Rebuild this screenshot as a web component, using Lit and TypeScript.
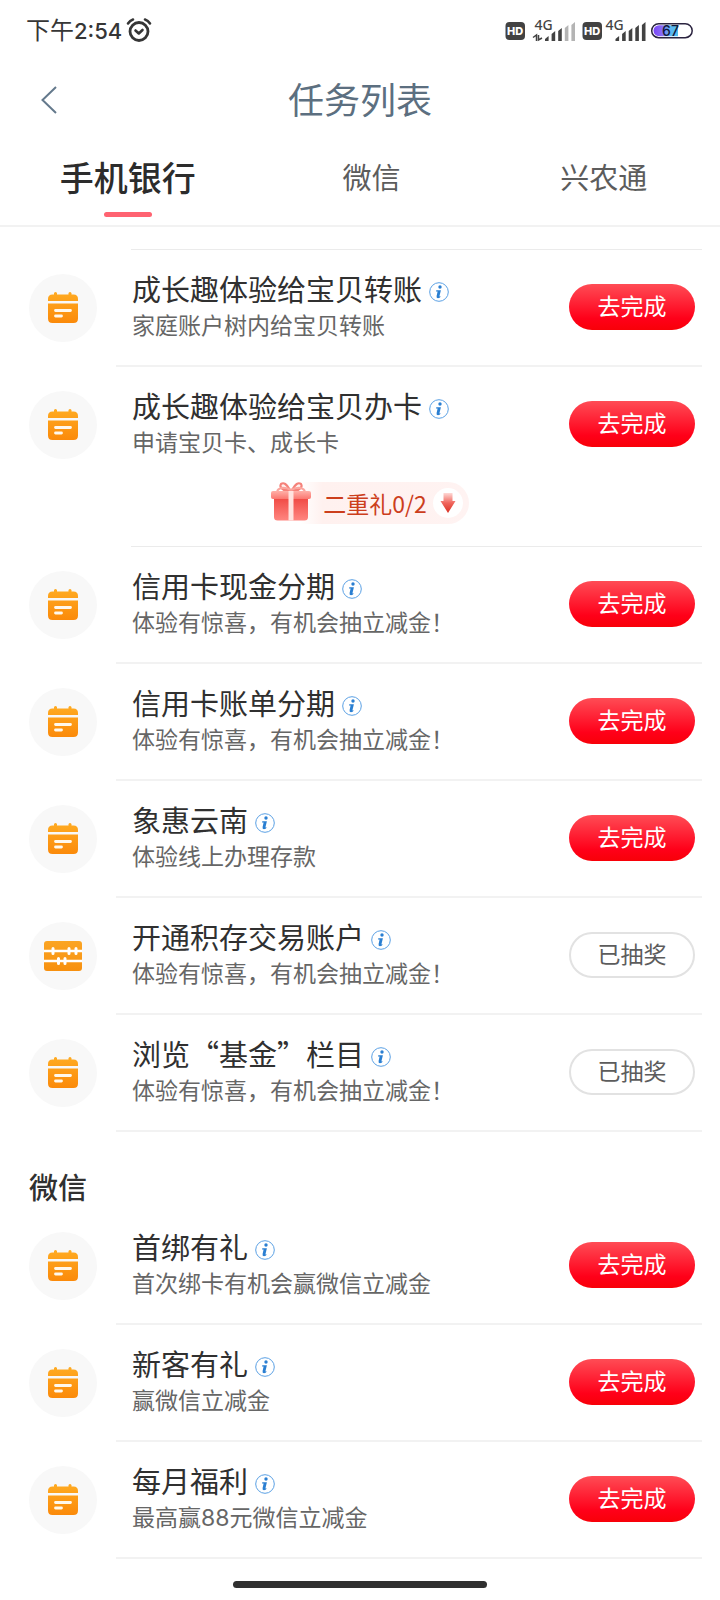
import { LitElement, html, css, svg } from "lit";
import { customElement, property, state } from "lit/decorators.js";

type IconName = "calendar" | "abacus";

interface Task {
  title: string;
  desc: string;
  icon?: IconName;
  done?: boolean;
}

const familyTasks: Task[] = [
  { title: "成长趣体验给宝贝转账", desc: "家庭账户树内给宝贝转账" },
  { title: "成长趣体验给宝贝办卡", desc: "申请宝贝卡、成长卡" },
];

const bankTasks: Task[] = [
  { title: "信用卡现金分期", desc: "体验有惊喜，有机会抽立减金！" },
  { title: "信用卡账单分期", desc: "体验有惊喜，有机会抽立减金！" },
  { title: "象惠云南", desc: "体验线上办理存款" },
  { title: "开通积存交易账户", desc: "体验有惊喜，有机会抽立减金！", icon: "abacus", done: true },
  { title: "浏览“基金”栏目", desc: "体验有惊喜，有机会抽立减金！", done: true },
];

const wechatTasks: Task[] = [
  { title: "首绑有礼", desc: "首次绑卡有机会赢微信立减金" },
  { title: "新客有礼", desc: "赢微信立减金" },
  { title: "每月福利", desc: "最高赢88元微信立减金" },
];

const withDigits = (text: string) =>
  text.split(/(\d+)/).map((part) => (/^\d+$/.test(part) ? html`<span class="num">${part}</span>` : part));

@customElement("status-bar")
class StatusBar extends LitElement {
  static styles = css`
    :host {
      display: flex;
      align-items: center;
      justify-content: space-between;
      height: 60px;
      padding: 0 27px 0 26px;
      color: #363636;
    }
    .clock {
      display: flex;
      align-items: center;
      gap: 4px;
      font-size: 24px;
      line-height: 32px;
    }
    .num {
      font-family: Inter, sans-serif;
      font-weight: 500;
      font-size: 22px;
    }
    svg {
      display: block;
    }
    .g {
      font: 500 14px "Noto Sans", sans-serif;
      fill: #444;
    }
    .hd {
      font: 800 11px Inter, sans-serif;
      fill: #fff;
    }
    .level {
      font: 500 14px Inter, sans-serif;
      fill: #10183c;
    }
  `;

  private bars(x: number, active: number) {
    const tops = [36, 31, 28, 25, 22];
    return tops.map((top, i) => {
      const left = x + i * 6.6;
      return svg`<path d="M${left} ${top + 3} L${left + 3.6} ${top} V41 H${left} Z"
        fill=${i < active ? "#424242" : "#b4b4b4"} />`;
    });
  }

  render() {
    return html`
      <div class="clock">
        <span>下午<span class="num">2:54</span></span>
        <svg width="26" height="26" viewBox="0 0 26 26" fill="none" stroke="#363636" stroke-linecap="round" aria-hidden="true">
          <circle cx="13" cy="14.5" r="9" stroke-width="2.8" />
          <path d="M2 6.500 Q4 3.500 7 2.500 M24 6.500 Q22 3.500 19 2.500" stroke-width="2.600" />
          <path d="M9.500 13.500 L12.800 16.500 L16.500 13" stroke-width="2.600" stroke-linejoin="round" />
        </svg>
      </div>
      <svg width="188" height="60" viewBox="505 0 188 60" aria-hidden="true">
        <defs>
          <linearGradient id="charge" x1="0" x2="1" y1="0" y2="0">
            <stop offset="0" stop-color="#7a45f5" />
            <stop offset="0.350" stop-color="#8a6cf8" />
            <stop offset="0.650" stop-color="#5fb4f2" />
            <stop offset="1" stop-color="#4fc0ee" />
          </linearGradient>
        </defs>
        <rect x="505.500" y="22" width="19.500" height="18" rx="4" fill="#424242" />
        <text class="hd" x="515.2" y="35" text-anchor="middle">HD</text>
        <text class="g" x="534.5" y="30">4G</text>
        <path d="M533 37.500 L536.500 35 V41 M538.500 35 V40 L542 38" fill="none" stroke="#424242" stroke-width="1.500" />
        ${this.bars(545, 3)}
        <rect x="582.500" y="22" width="19.500" height="18" rx="4" fill="#424242" />
        <text class="hd" x="592.2" y="35" text-anchor="middle">HD</text>
        <text class="g" x="605.5" y="30">4G</text>
        ${this.bars(615.5, 5)}
        <rect x="651.700" y="23.700" width="40.500" height="14" rx="7" fill="#fff" stroke="#2b2440" stroke-width="1.500" />
        <path d="M659 25.200 H678 V36.200 H659 A5.500 5.500 0 0 1 659 25.200 Z" fill="url(#charge)" />
        <text class="level" x="670.5" y="36" text-anchor="middle">67</text>
      </svg>
    `;
  }
}

@customElement("task-row")
class TaskRow extends LitElement {
  @property({ attribute: false }) task!: Task;
  @property({ type: Boolean }) plain = false;

  static styles = css`
    :host {
      display: flex;
      gap: 19px;
      padding: 0 18px 0 29px;
    }
    .badge {
      display: grid;
      place-items: center;
      flex: none;
      align-self: center;
      width: 68px;
      height: 68px;
      margin-bottom: 2px;
      border-radius: 50%;
      background: #f8f8f8;
    }
    .badge svg,
    .info svg {
      display: block;
    }
    .body {
      flex: 1;
      min-width: 0;
      display: flex;
      align-items: center;
      justify-content: space-between;
      gap: 16px;
      min-height: 115px;
      padding: 0 7px 0 16px;
      border-bottom: 2px solid #f2f2f2;
    }
    .body.plain {
      border-bottom-color: transparent;
    }
    .text {
      min-width: 0;
      padding-bottom: 7px;
    }
    h3 {
      display: flex;
      align-items: center;
      gap: 7px;
      margin: 0;
      font-size: 29px;
      line-height: 40px;
      font-weight: 400;
      color: #303030;
    }
    .info {
      padding: 8px 0 0;
      border: 0;
      background: none;
      cursor: pointer;
    }
    p {
      margin: 0;
      font-size: 23px;
      line-height: 32px;
      color: #666;
    }
    .num {
      font-family: Inter, sans-serif;
      line-height: 1;
    }
    .action {
      flex: none;
      width: 126px;
      height: 46px;
      padding: 0 0 4px;
      margin-bottom: 1px;
      border: 0;
      border-radius: 23px;
      font: inherit;
      font-size: 23px;
      line-height: 42px;
      color: #fff;
      background: linear-gradient(#ff4c55 0%, #ff2336 40%, #ff0019 75%, #f80008 100%);
      cursor: pointer;
    }
    .action.done {
      border: 2px solid #e2e2e2;
      line-height: 38px;
      color: #5c5c5c;
      background: #fff;
    }
  `;

  private calendar() {
    return html`<svg width="32" height="36" viewBox="0 0 32 36" aria-hidden="true">
      <defs>
        <linearGradient id="cal" x1="0" x2="0" y1="0" y2="1">
          <stop offset="0" stop-color="#ffab22" />
          <stop offset="1" stop-color="#fb8a0a" />
        </linearGradient>
      </defs>
      <path
        d="M1 11 V9 Q1 4.500 5.500 4.500 H7 V3 Q8.500 1 10 3 V4.500 H21.500 V3 Q23 1 24.500 3 V4.500 H26.500 Q31 4.500 31 9 V11 Z
           M1 13.500 H31 V28.500 Q31 33 26.500 33 H5.500 Q1 33 1 28.500 Z"
        fill="url(#cal)"
      />
      <path d="M8.500 20.500 H23.500 M8.500 26 H14.500" stroke="#fff8ec" stroke-width="2.800" stroke-linecap="round" />
    </svg>`;
  }

  private abacus() {
    return html`<svg width="38" height="30" viewBox="0 0 38 30" aria-hidden="true">
      <defs>
        <linearGradient id="aba" x1="0" x2="0" y1="0" y2="1">
          <stop offset="0" stop-color="#fba524" />
          <stop offset="1" stop-color="#f7900f" />
        </linearGradient>
      </defs>
      <rect x="0" y="0" width="38" height="30" rx="3" fill="url(#aba)" />
      <path d="M0 10 H38 M0 20 H38" stroke="#fff" stroke-width="2.400" />
      <path d="M9 7.500 V12.500 M25 7.500 V12.500 M32 7.500 V12.500 M14.500 17.500 V22.500 M21 17.500 V22.500" stroke="#fff" stroke-width="3" stroke-linecap="round" />
    </svg>`;
  }

  render() {
    const { title, desc, icon, done } = this.task;
    return html`
      <span class="badge">${icon === "abacus" ? this.abacus() : this.calendar()}</span>
      <div class="body ${this.plain ? "plain" : ""}">
        <div class="text">
          <h3>
            ${title}
            <button class="info" aria-label="任务说明">
              <svg width="20" height="20" viewBox="0 0 20 20" aria-hidden="true">
                <circle cx="10" cy="10" r="9.300" fill="#fff" stroke="#5aa0e4" stroke-width="1" />
                <circle cx="11" cy="5" r="1.700" fill="#2a7fd2" />
                <path d="M7.300 8.200 H11.900 L10.500 14 Q10.400 15 12 14.300 Q10.800 16.200 9 16.200 Q7.200 16.200 7.600 14 L8.600 9.500 H7 Z" fill="#2a7fd2" />
              </svg>
            </button>
          </h3>
          <p>${withDigits(desc)}</p>
        </div>
        <button class="action ${done ? "done" : ""}">${done ? "已抽奖" : "去完成"}</button>
      </div>
    `;
  }
}

@customElement("app-root")
class AppRoot extends LitElement {
  @state() private tab = 0;

  static styles = css`
    :host {
      display: block;
      background: #fff;
      font-family: "Noto Sans CJK SC", sans-serif;
      color: #303030;
    }
    header {
      display: grid;
      grid-template-columns: 58px 1fr 58px;
      align-items: center;
      height: 80px;
      padding: 0 20px;
    }
    .back {
      justify-self: center;
      padding: 8px 16px;
      border: 0;
      background: none;
      cursor: pointer;
    }
    .back svg {
      display: block;
    }
    h1 {
      margin: 0;
      padding-bottom: 4px;
      font-size: 36px;
      line-height: 48px;
      font-weight: 400;
      text-align: center;
      color: #5c6f80;
    }
    nav {
      display: grid;
      grid-template-columns: 11fr 10fr 10fr;
      border-bottom: 2px solid #f2f2f2;
    }
    .tab {
      display: grid;
      grid-template-rows: 72px 5px;
      justify-items: center;
      align-items: center;
      align-content: start;
      height: 85px;
      padding: 0;
      border: 0;
      background: none;
      font: inherit;
      font-size: 29px;
      color: #5c5c5c;
      cursor: pointer;
    }
    .tab.active {
      font-size: 34px;
      font-weight: 500;
      color: #2c2c2c;
    }
    .tab.active::after {
      content: "";
      width: 48px;
      height: 5px;
      border-radius: 3px;
      background: #ff6371;
    }
    .rule {
      height: 1px;
      margin: 0 18px 0 131px;
      background: #ebebeb;
    }
    .first {
      margin-top: 22px;
    }
    .gift {
      display: flex;
      justify-content: center;
      margin: -2px 0 22px;
      padding-left: 20px;
    }
    .pill {
      display: flex;
      align-items: center;
      height: 42px;
      padding: 0 6px 0 0;
      border: 0;
      border-radius: 21px;
      background: linear-gradient(90deg, #fff 15%, #fff1ef 26%, #fff3f2 100%);
      font: inherit;
      font-size: 23px;
      line-height: 40px;
      color: #cc3e1c;
      cursor: pointer;
    }
    .pill svg {
      display: block;
    }
    .label {
      padding: 0 6px 0 12px;
    }
    h2 {
      margin: 0;
      padding: 34px 29px 2px;
      font-size: 29px;
      line-height: 40px;
      font-weight: 500;
    }
    .home {
      width: 254px;
      height: 7px;
      margin: 22px auto 0;
      border-radius: 4px;
      background: #303030;
    }
    footer {
      padding-bottom: 12px;
    }
  `;

  private gift() {
    return html`<div class="gift">
      <button class="pill">
        <svg width="40" height="42" viewBox="0 0 40 42" aria-hidden="true">
          <defs>
            <linearGradient id="box" x1="0" x2="0" y1="0" y2="1">
              <stop offset="0" stop-color="#f04a44" />
              <stop offset="1" stop-color="#ff8680" />
            </linearGradient>
            <linearGradient id="lid" x1="0" x2="0" y1="0" y2="1">
              <stop offset="0" stop-color="#ffb0a8" />
              <stop offset="1" stop-color="#fb7770" />
            </linearGradient>
          </defs>
          <path d="M19 8 Q14 -1 10 2 Q8 5 13 8 Z M21 8 Q26 -1 30 2 Q32 5 27 8 Z" fill="#fff1ef" stroke="#f5827a" stroke-width="2.200" />
          <path d="M20 8 Q10 3 6 9 M20 8 Q30 3 34 9" fill="none" stroke="#fba59e" stroke-width="2" />
          <path d="M3 16 H37 V35 Q37 38.500 33.500 38.500 H6.500 Q3 38.500 3 35 Z" fill="url(#box)" />
          <rect x="0" y="9" width="40" height="8" rx="2" fill="url(#lid)" />
          <path d="M17.500 9 H22.500 V38.500 H17.500 Z" fill="#ffe3df" />
        </svg>
        <span class="label">二重礼0/2</span>
        <svg width="30" height="30" viewBox="0 0 30 30" aria-hidden="true">
          <defs>
            <linearGradient id="down" x1="0" x2="0" y1="0" y2="1">
              <stop offset="0" stop-color="#ffd9d6" />
              <stop offset="0.500" stop-color="#f0655c" />
              <stop offset="1" stop-color="#d92f22" />
            </linearGradient>
          </defs>
          <circle cx="15" cy="15" r="15" fill="#fff" />
          <path d="M10.500 5 H19.500 V13 H22.500 L15 25 L7.500 13 H10.500 Z" fill="url(#down)" />
        </svg>
      </button>
    </div>`;
  }

  private rows(tasks: Task[], openEnd = false) {
    return tasks.map((task, i) => html`<task-row .task=${task} ?plain=${openEnd && i === tasks.length - 1}></task-row>`);
  }

  render() {
    return html`
      <status-bar></status-bar>
      <header>
        <button class="back" aria-label="返回">
          <svg width="18" height="30" viewBox="0 0 18 30" fill="none" aria-hidden="true">
            <path d="M16 2 L2.500 15 L16 28" stroke="#64798c" stroke-width="2" />
          </svg>
        </button>
        <h1>任务列表</h1>
      </header>
      <nav>
        ${["手机银行", "微信", "兴农通"].map(
          (name, i) => html`<button class="tab ${i === this.tab ? "active" : ""}" @click=${() => (this.tab = i)}>
            ${name}
          </button>`,
        )}
      </nav>
      <main>
        <div class="rule first"></div>
        ${this.rows(familyTasks, true)} ${this.gift()}
        <div class="rule"></div>
        ${this.rows(bankTasks)}
        <h2>微信</h2>
        ${this.rows(wechatTasks)}
      </main>
      <footer><div class="home"></div></footer>
    `;
  }
}
